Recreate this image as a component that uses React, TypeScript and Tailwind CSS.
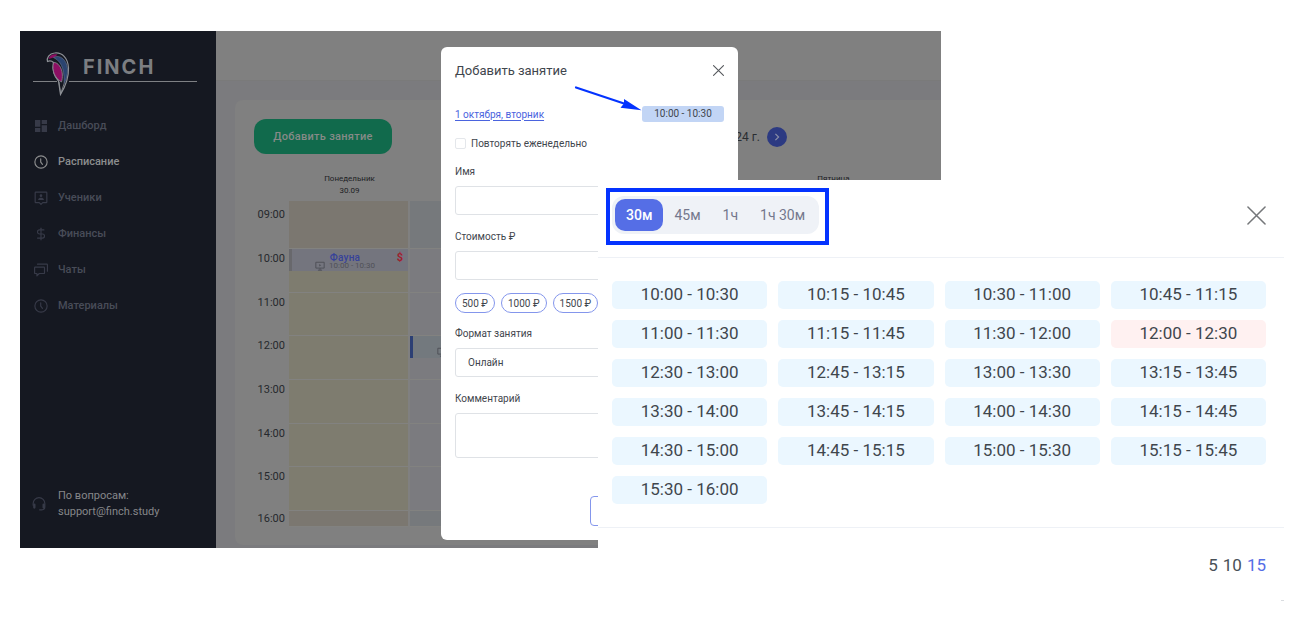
import React from "react";
import { DollarSign } from "lucide-react";
import { MdDashboard } from "react-icons/md";

const slots = [
  "10:00 - 10:30", "10:15 - 10:45", "10:30 - 11:00", "10:45 - 11:15",
  "11:00 - 11:30", "11:15 - 11:45", "11:30 - 12:00", "12:00 - 12:30",
  "12:30 - 13:00", "12:45 - 13:15", "13:00 - 13:30", "13:15 - 13:45",
  "13:30 - 14:00", "13:45 - 14:15", "14:00 - 14:30", "14:15 - 14:45",
  "14:30 - 15:00", "14:45 - 15:15", "15:00 - 15:30", "15:15 - 15:45",
  "15:30 - 16:00",
];
const busy = "12:00 - 12:30";

const days = [
  { id: "mon", name: "Понедельник", date: "30.09" },
  { id: "tue" },
  { id: "wed" },
  { id: "thu" },
  { id: "fri", name: "Пятница" },
];
const hours = [
  { time: "09:00", row: "h-12", pad: "pt-1.5" },
  { time: "10:00", row: "h-11", pad: "pt-0.5" },
  { time: "11:00", row: "h-[43px]", pad: "pt-0.5" },
  { time: "12:00", row: "h-11", pad: "pt-0.5" },
  { time: "13:00", row: "h-11", pad: "pt-0.5" },
  { time: "14:00", row: "h-[43px]", pad: "pt-0.5" },
  { time: "15:00", row: "h-11", pad: "pt-0.5" },
  { time: "16:00", row: "h-4", pad: "pt-0" },
];

function ClockIcon() {
  return (
    <svg viewBox="0 0 24 24" className="size-3.5" fill="none" stroke="currentColor" strokeWidth="2" strokeLinecap="round">
      <circle cx="12" cy="12" r="10.5" />
      <path d="M11.500 6.500v5.500l3 4" />
    </svg>
  );
}

function StudentIcon() {
  return (
    <svg viewBox="0 0 24 24" className="size-3.5" fill="none" stroke="currentColor" strokeWidth="2" strokeLinejoin="round">
      <path d="M3 2h18a1 1 0 0 1 1 1v16a1 1 0 0 1-1 1h-6l-3 3-3-3H3a1 1 0 0 1-1-1V3a1 1 0 0 1 1-1z" />
      <circle cx="12" cy="8" r="2.3" fill="currentColor" stroke="none" />
      <path d="M7 15.500c0-3 2.500-4 5-4s5 1 5 4z" fill="currentColor" stroke="none" />
    </svg>
  );
}

function ChatIcon() {
  return (
    <svg viewBox="0 0 24 24" className="size-3.5" fill="none" stroke="currentColor" strokeWidth="2" strokeLinejoin="round" strokeLinecap="round">
      <path d="M2 7h15a1 1 0 0 1 1 1v9a1 1 0 0 1-1 1H9l-4 4v-4H2a1 1 0 0 1-1-1V8a1 1 0 0 1 1-1z" />
      <path d="M6 2h16a1 1 0 0 1 1 1v11" />
    </svg>
  );
}

function HeadsetIcon() {
  return (
    <svg viewBox="0 0 24 24" className="size-3.5" fill="none" stroke="currentColor" strokeWidth="2" strokeLinecap="round">
      <path d="M2 14v-3a10 10 0 0 1 20 0v6c0 3-2 5-5 5h-4" />
      <path d="M4 13v5M20 13v5" strokeWidth="4" />
    </svg>
  );
}

function MonitorIcon() {
  return (
    <svg viewBox="0 0 24 24" className="size-2.5 shrink-0" fill="none" stroke="currentColor" strokeWidth="2.400">
      <path d="M2 3h20v14H2zM12 17v5M7 22h10" />
      <path d="M10 7v6l5-3z" fill="currentColor" stroke="none" />
    </svg>
  );
}

function CloseIcon({ className }: { className: string }) {
  return (
    <svg viewBox="0 0 20 20" className={className} fill="none" stroke="currentColor" strokeLinecap="round">
      <path d="M1 1l18 18M19 1L1 19" />
    </svg>
  );
}

function Logo() {
  return (
    <div className="flex h-[77px] pl-[13px] pr-[19px]">
      <svg viewBox="0 0 163 77" className="h-[77px] w-full" preserveAspectRatio="xMinYMin meet">
        <path d="M0 50.500h24M36 50.500h128" stroke="#7e8084" strokeWidth="1" />
        <path d="M14.500 30.500C13.500 27 16 22.500 21.500 22C29 21 35 27 35.500 37C36 48 32 56 27.500 63.500L25.500 50C21 45 19 39 20.500 31.500C18.500 29.500 16.500 29.500 14.500 30.500z" fill="#151821" stroke="#8d9096" strokeWidth="1.200" />
        <path d="M15.500 28C16.500 24 20 22.600 24.500 23.400C22.500 26 19 27 15.500 28z" fill="#8d0f63" />
        <path d="M20.500 26.500C27 23 34 29 34.500 38C34.800 44 33 49 31 53C31.500 43 30.500 31 20.500 26.500z" fill="#2b4470" stroke="#7684a0" strokeWidth=".5" />
        <path d="M20.500 31.500C25 31 29 37 29.300 43C29.500 46 29.200 49 28.500 51C22 47 18.500 40 20.500 31.500z" fill="#8d0f63" stroke="#8d9096" strokeWidth=".8" />
        <path d="M26 51l1.700 11.500L31 53" fill="none" stroke="#8d9096" strokeWidth=".8" />
        <text x="50" y="43" fill="#7c7e82" className="font-['Inter',sans-serif] text-[20px] font-bold tracking-widest">FINCH</text>
      </svg>
    </div>
  );
}

const nav = [
  { label: "Дашборд", icon: <MdDashboard className="size-4" /> },
  { label: "Расписание", icon: <ClockIcon />, active: true },
  { label: "Ученики", icon: <StudentIcon /> },
  { label: "Финансы", icon: <DollarSign className="size-3.5" /> },
  { label: "Чаты", icon: <ChatIcon /> },
  { label: "Материалы", icon: <ClockIcon /> },
];

function Sidebar() {
  return (
    <aside className="flex w-[196px] shrink-0 flex-col bg-[#151821]">
      <Logo />
      <nav className="flex flex-col">
        {nav.map((n) => (
          <a
            key={n.label}
            href="#"
            aria-current={n.active ? "page" : undefined}
            className={`flex h-9 items-center gap-[9px] pl-[13px] text-[11px] font-medium ${n.active ? "text-[#8c8d8e]" : "text-[#484c58]"}`}
          >
            <span className={`flex w-4 justify-center ${n.active ? "" : "text-[#373a48]"}`}>{n.icon}</span>
            {n.label}
          </a>
        ))}
      </nav>
      <div className="mt-auto flex items-center gap-3 pb-7 pl-3 text-[11px] leading-4 text-[#86878a]">
        <span className="text-[#373a48]"><HeadsetIcon /></span>
        <p>
          По вопросам:
          <br />
          <a href="mailto:support@finch.study">support@finch.study</a>
        </p>
      </div>
    </aside>
  );
}

function Cell({ day, hour }: { day: number; hour: string }) {
  const edge = hour === "09:00" || hour === "16:00";
  const tone =
    day === 0 ? (edge ? "bg-[#7b7770]" : "bg-[#7e7c6f]") : edge ? "bg-[#76797c]" : "bg-[#7b7b7f]";
  return (
    <td className={`border-r-2 border-b border-r-[#808080] border-b-[#828280] p-0 align-top ${tone}`}>
      {day === 0 && hour === "10:00" && (
        <div className="flex h-[22px] border-l-3 border-[#68686c] bg-[#74757e] text-[#505158]">
          <div className="w-1.5" />
          <div className="flex-1 text-center">
            <div className="text-[10px] leading-[18px] font-medium tracking-wide text-[#36429a]">Фауна</div>
            <div className="-mt-1.5 flex items-center justify-center gap-1 text-[8px] leading-[10px]">
              <MonitorIcon />
              10:00 - 10:30
            </div>
          </div>
          <div className="w-4 text-center text-[11px] leading-[18px] font-bold text-[#a0202e]">$</div>
        </div>
      )}
      {day === 1 && hour === "12:00" && (
        <div className="flex h-[22px] items-end border-l-3 border-[#2c3f74] bg-[#73797e] pb-px pl-6 text-[#505158]">
          <MonitorIcon />
        </div>
      )}
    </td>
  );
}

function Schedule() {
  return (
    <section className="mt-[19px] mb-[3px] ml-[19px] flex-1 overflow-hidden rounded-l-lg bg-[#808080] pt-[19px]">
      <div className="flex items-center pl-[19px]">
        <button className="h-[35px] w-[138px] shrink-0 rounded-xl bg-[#116a4c] pt-px text-[11px] font-medium tracking-wide text-[#868a88]">
          Добавить занятие
        </button>
        <div className="flex w-[395px] shrink-0 items-center justify-end gap-[7px] text-[12px] text-[#2a2d31]">
          2024 г.
          <button aria-label="Следующая неделя" className="flex size-5 items-center justify-center rounded-full bg-[#2c3a82] text-[#8a8fa8]">
            <svg viewBox="0 0 10 10" className="size-2" fill="none" stroke="currentColor" strokeWidth="1.500">
              <path d="M3 1l4 4-4 4" />
            </svg>
          </button>
        </div>
      </div>
      <table className="w-[659px] table-fixed border-separate border-spacing-0">
        <thead>
          <tr className="h-[47px]">
            <th className="w-[54px] p-0" />
            {days.map(({ id, name, date }) => (
              <th key={id} className="px-0 pt-[19px] pb-1 align-top text-[8px] leading-3 font-normal text-[#1d2024]">
                {name}
                <br />
                {date}
              </th>
            ))}
          </tr>
        </thead>
        <tbody>
          {hours.map(({ time, row, pad }) => (
            <tr key={time} className={row}>
              <th className={`px-1 pb-0 text-right align-top text-[11px] leading-4 font-normal text-[#26292d] ${pad}`}>
                {time}
              </th>
              {days.map(({ id }, i) => (
                <Cell key={id} day={i} hour={time} />
              ))}
            </tr>
          ))}
        </tbody>
      </table>
    </section>
  );
}

const label = "block text-[10px] leading-4";
const field = "block w-full rounded-[3px] border border-[#dfe2e6] bg-white";

function LessonModal() {
  return (
    <div role="dialog" aria-label="Добавить занятие" className="absolute top-4 left-[421px] flex h-[493px] w-[297px] flex-col rounded-md bg-white px-3.5 text-[#3f464d]">
      <div className="flex h-[47px] items-center justify-between">
        <h2 className="text-[13px]">Добавить занятие</h2>
        <button aria-label="Закрыть" className="text-[#55585c]">
          <CloseIcon className="size-[11px] stroke-2" />
        </button>
      </div>
      <div className="mt-3 flex h-4 items-center justify-between text-[10px]">
        <a href="#" className="text-[#4a63de] underline underline-offset-2">1 октября, вторник</a>
        <button className="h-4 w-[82px] rounded-[3px] bg-[#c2d5f5] text-[10px] leading-4">10:00 - 10:30</button>
      </div>
      <label className="mt-[13px] flex h-4 items-center gap-[5px] text-[10px]">
        <input type="checkbox" className="size-[11px] appearance-none rounded-xs border border-[#e4e7eb]" />
        Повторять еженедельно
      </label>
      <label htmlFor="name" className={`mt-[13px] ${label}`}>Имя</label>
      <input id="name" className={`mt-1.5 h-[29px] ${field}`} />
      <label htmlFor="price" className={`mt-3.5 ${label}`}>Стоимость ₽</label>
      <input id="price" className={`mt-1.5 h-[29px] ${field}`} />
      <div className="mt-[13px] flex gap-1.5 text-[10px]">
        {["500 ₽", "1000 ₽", "1500 ₽"].map((p) => (
          <button key={p} className="h-5 rounded-full border border-[#8496ec] px-1.5">{p}</button>
        ))}
      </div>
      <label htmlFor="format" className={`mt-[13px] ${label}`}>Формат занятия</label>
      <select id="format" className={`mt-1.5 h-[29px] appearance-none px-3 text-[10px] ${field}`}>
        <option>Онлайн</option>
      </select>
      <label htmlFor="comment" className={`mt-3.5 ${label}`}>Комментарий</label>
      <textarea id="comment" className={`mt-1.5 h-[45px] resize-none ${field}`} />
      <button aria-label="Сохранить" className="mt-auto mb-3.5 h-[30px] w-[134px] self-end rounded-[4px] border border-[#8496ec]" />
      <svg viewBox="0 0 70 28" className="pointer-events-none absolute top-[38px] left-[133px] h-7 w-[70px]">
        <path d="M2 2.500L50 18.500" stroke="#0433ff" strokeWidth="2.200" strokeLinecap="round" />
        <path d="M50 14L67.500 25.200L46.500 22.800L50 18.500z" fill="#0433ff" />
      </svg>
    </div>
  );
}

function TimePicker() {
  return (
    <section aria-label="Выбор времени" className="z-10 col-start-2 col-end-4 row-start-2 row-end-4 flex flex-col bg-white text-[#495057]">
      <header className="flex h-[78px] items-start justify-between border-b border-[#eef1f6] pt-2 pr-[18px] pl-2">
        <div className="border-4 border-[#0433ff] pt-1 pr-1.5 pb-[7px] pl-0.5">
          <div className="flex rounded-xl bg-[#eff2f7] p-[3px] text-[14px] text-[#74788d]">
            {["30м", "45м", "1ч", "1ч 30м"].map((t, i) => (
              <button
                key={t}
                aria-pressed={i === 0}
                className={`h-8 rounded-[10px] px-[11px] ${i === 0 ? "bg-[#556ee6] font-medium text-white" : ""}`}
              >
                {t}
              </button>
            ))}
          </div>
        </div>
        <button aria-label="Закрыть" className="mt-[18px] text-[#75777a]">
          <CloseIcon className="size-[19px] stroke-[1.6]" />
        </button>
      </header>
      <div className="grid grid-cols-4 gap-[11px] border-b border-[#eef1f6] pt-[23px] pr-[18px] pb-[23px] pl-3.5">
        {slots.map((s) => (
          <button key={s} className={`h-7 rounded-[5px] text-[17px] text-[#3f464d] ${s === busy ? "bg-[#fff1f1]" : "bg-[#ebf7ff]"}`}>
            {s}
          </button>
        ))}
      </div>
      <footer className="flex h-[72px] items-center justify-end gap-[5px] pt-[3px] pr-[18px] text-[17px]">
        <button>5</button>
        <button>10</button>
        <button aria-pressed="true" className="text-[#556ee6]">15</button>
      </footer>
      <span className="h-px w-[3px] self-end bg-[#d9dce0]" />
    </section>
  );
}

export default function App() {
  return (
    <main className="grid grid-cols-[578fr_343fr_343fr] grid-rows-[149px_368px_auto] bg-white pt-[31px] pr-8 pb-6 pl-5 font-['Roboto',sans-serif]">
      <div className="relative col-start-1 col-end-3 row-start-1 row-end-3 flex bg-[#7b7b7e]">
        <Sidebar />
        <div className="flex min-w-0 flex-1 flex-col">
          <header className="h-[50px] border-b border-[#7a7a7a] bg-[#808080]" />
          <Schedule />
        </div>
        <LessonModal />
      </div>
      <TimePicker />
    </main>
  );
}
